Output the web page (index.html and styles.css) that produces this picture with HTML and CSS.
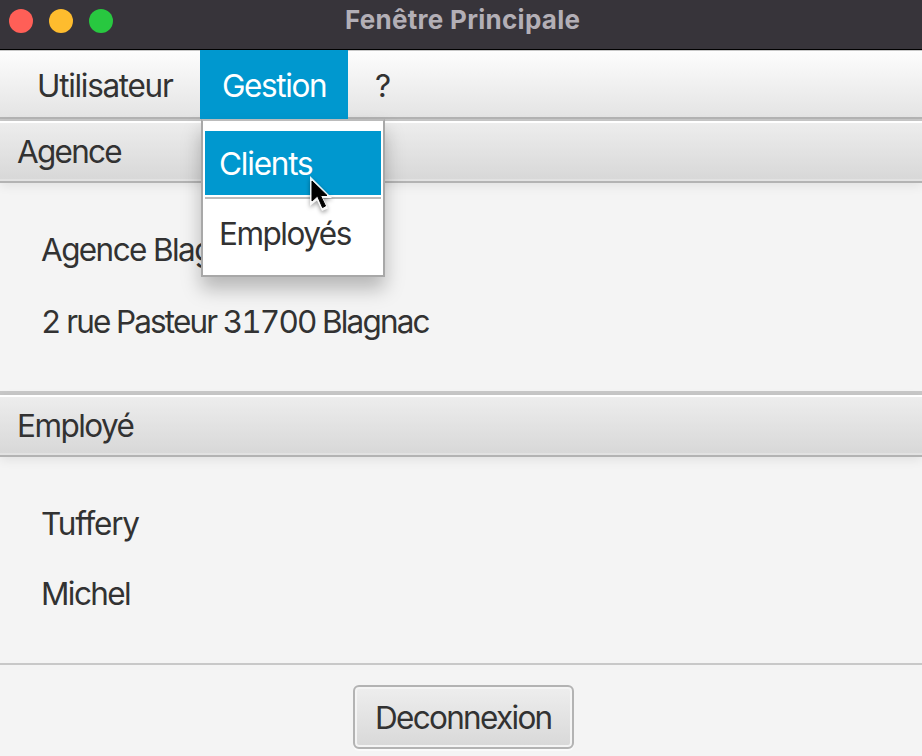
FILE: index.html
```html
<!DOCTYPE html>
<html lang="fr">
<head>
<meta charset="utf-8">
<title>Fenêtre Principale</title>
<link rel="stylesheet" href="styles.css">
</head>
<body>
<div class="window">
  <header class="titlebar">
    <div class="lights"><i class="light close"></i><i class="light minimize"></i><i class="light zoom"></i></div>
    <h1 class="title"><span>Fenêtre Principale</span></h1>
  </header>
  <nav class="menubar">
    <div class="menu user"><span>Utilisateur</span></div>
    <div class="menu active"><span>Gestion</span>
      <div class="dropdown">
        <div class="item selected"><span class="clients">Clients</span></div>
        <div class="separator"></div>
        <div class="item"><span class="employees">Employés</span></div>
      </div>
    </div>
    <div class="menu help"><span>?</span></div>
  </nav>
  <section class="pane agency">
    <h2 class="pane-title"><span>Agence</span></h2>
    <div class="pane-body">
      <p><span class="name">Agence Blagnac</span></p>
      <p><span class="address">2 rue Pasteur 31700 Blagnac</span></p>
    </div>
  </section>
  <section class="pane employee">
    <h2 class="pane-title"><span>Employé</span></h2>
    <div class="pane-body">
      <p><span class="lastname">Tuffery</span></p>
      <p><span class="firstname">Michel</span></p>
    </div>
  </section>
  <footer class="footer"><button class="button"><span>Deconnexion</span></button></footer>
  <svg class="cursor" width="28" height="42" viewBox="0 0 28 42">
    <path d="M2 2V32L9 26.500L14 37L20 34.500L15 24H24Z" fill="#fff" fill-opacity=".9"/>
    <path d="M4 7V27L9.500 22L14.500 33.500L17.500 32L12.500 21.500H19Z" fill="#000" stroke="#000"/>
  </svg>
</div>
</body>
</html>
```

FILE: styles.css
```css
* { box-sizing: border-box; }
body {
  margin: 0;
  font: 31.5px/40px Inter, "Liberation Sans", sans-serif;
  color: #323232;
  background: #f4f4f4;
}
h1, h2, p { margin: 0; font-size: inherit; font-weight: 400; }
.window {
  position: relative;
  display: flex;
  flex-direction: column;
  width: 922px;
  height: 756px;
  overflow: hidden;
  letter-spacing: -1.4px;
  white-space: nowrap;
}
.titlebar {
  display: grid;
  grid-template-columns: 345px 1fr;
  height: 50px;
  background: #37343a;
  border-bottom: 1px solid #000;
}
.lights { display: flex; gap: 16px; padding: 9px 0 0 9px; }
.light { width: 24px; height: 24px; border-radius: 50%; }
.close { background: #ff5f57; }
.minimize { background: #febc2e; }
.zoom { background: #28c840; }
.title {
  font-size: 26px;
  font-weight: 700;
  line-height: 39px;
  letter-spacing: 0.28px;
  color: #b3afb6;
}
.menubar {
  display: flex;
  height: 71px;
  line-height: 71px;
  background: linear-gradient(#c8c8c8 0 1px, #fdfdfd 1px, #e4e4e4 67px, #b4b4b4 67px 69px, #c8c8c8 69px);
}
.menu { position: relative; height: 69px; }
.user { width: 200px; padding-left: 37px; letter-spacing: -1.3px; }
.active { width: 148px; padding-left: 22px; color: #fff; background: #0098cf; }
.help { padding-left: 27px; }
.dropdown {
  position: absolute;
  z-index: 2;
  top: 69px;
  left: 1px;
  width: 184px;
  height: 158px;
  padding: 10px 2px 0;
  color: #323232;
  background: #fff;
  border: 2px solid #a8a8a8;
  border-top-color: #bbb;
  box-shadow: 0 12px 18px rgba(0, 0, 0, .25);
}
.item { height: 64px; padding-left: 14px; line-height: 62px; }
.selected { line-height: 66px; color: #fff; background: #0098cf; }
.clients { letter-spacing: -1.2px; }
.employees { letter-spacing: -1.5px; }
.separator { height: 2px; margin: 2px 0 4px; background: #bbb; }
.pane-title {
  height: 62px;
  padding-left: 17px;
  line-height: 62px;
  background: linear-gradient(#fff 0 2px, #ededed 2px, #d8d8d8 58px, #e2e2e2 58px 60px, #b3b3b3 60px);
  box-shadow: 0 3px 10px rgba(0, 0, 0, .08);
}
.agency .pane-title { letter-spacing: -1.75px; }
.employee .pane-title { letter-spacing: -1.55px; }
.pane-body { display: flex; flex-direction: column; padding-left: 41px; }
.agency .pane-body {
  gap: 32px;
  height: 212px;
  padding-top: 47px;
  border-bottom: 4px solid #c8c8c8;
}
.employee .pane-body {
  gap: 30px;
  height: 208px;
  padding-top: 47px;
  border-bottom: 2px solid #c8c8c8;
}
.name { letter-spacing: -1.6px; }
.address { letter-spacing: -1.87px; font-variant-numeric: tabular-nums; }
.lastname { letter-spacing: -1.2px; }
.firstname { letter-spacing: -1.6px; }
.footer { padding: 20px 0 0 353px; }
.button {
  display: block;
  width: 221px;
  height: 64px;
  padding: 2px 0 0 20px;
  font: inherit;
  letter-spacing: -1.7px;
  text-align: left;
  color: inherit;
  background: linear-gradient(#eee, #d8d8d8);
  border: 2px solid #b3b3b3;
  border-radius: 6px;
  box-shadow: inset 0 0 0 2px #f4f4f4, 0 2px 0 #fafafa;
}
.cursor {
  position: absolute;
  z-index: 3;
  top: 174px;
  left: 308px;
  filter: drop-shadow(0 2px 2px rgba(0, 0, 0, .4));
}
```
